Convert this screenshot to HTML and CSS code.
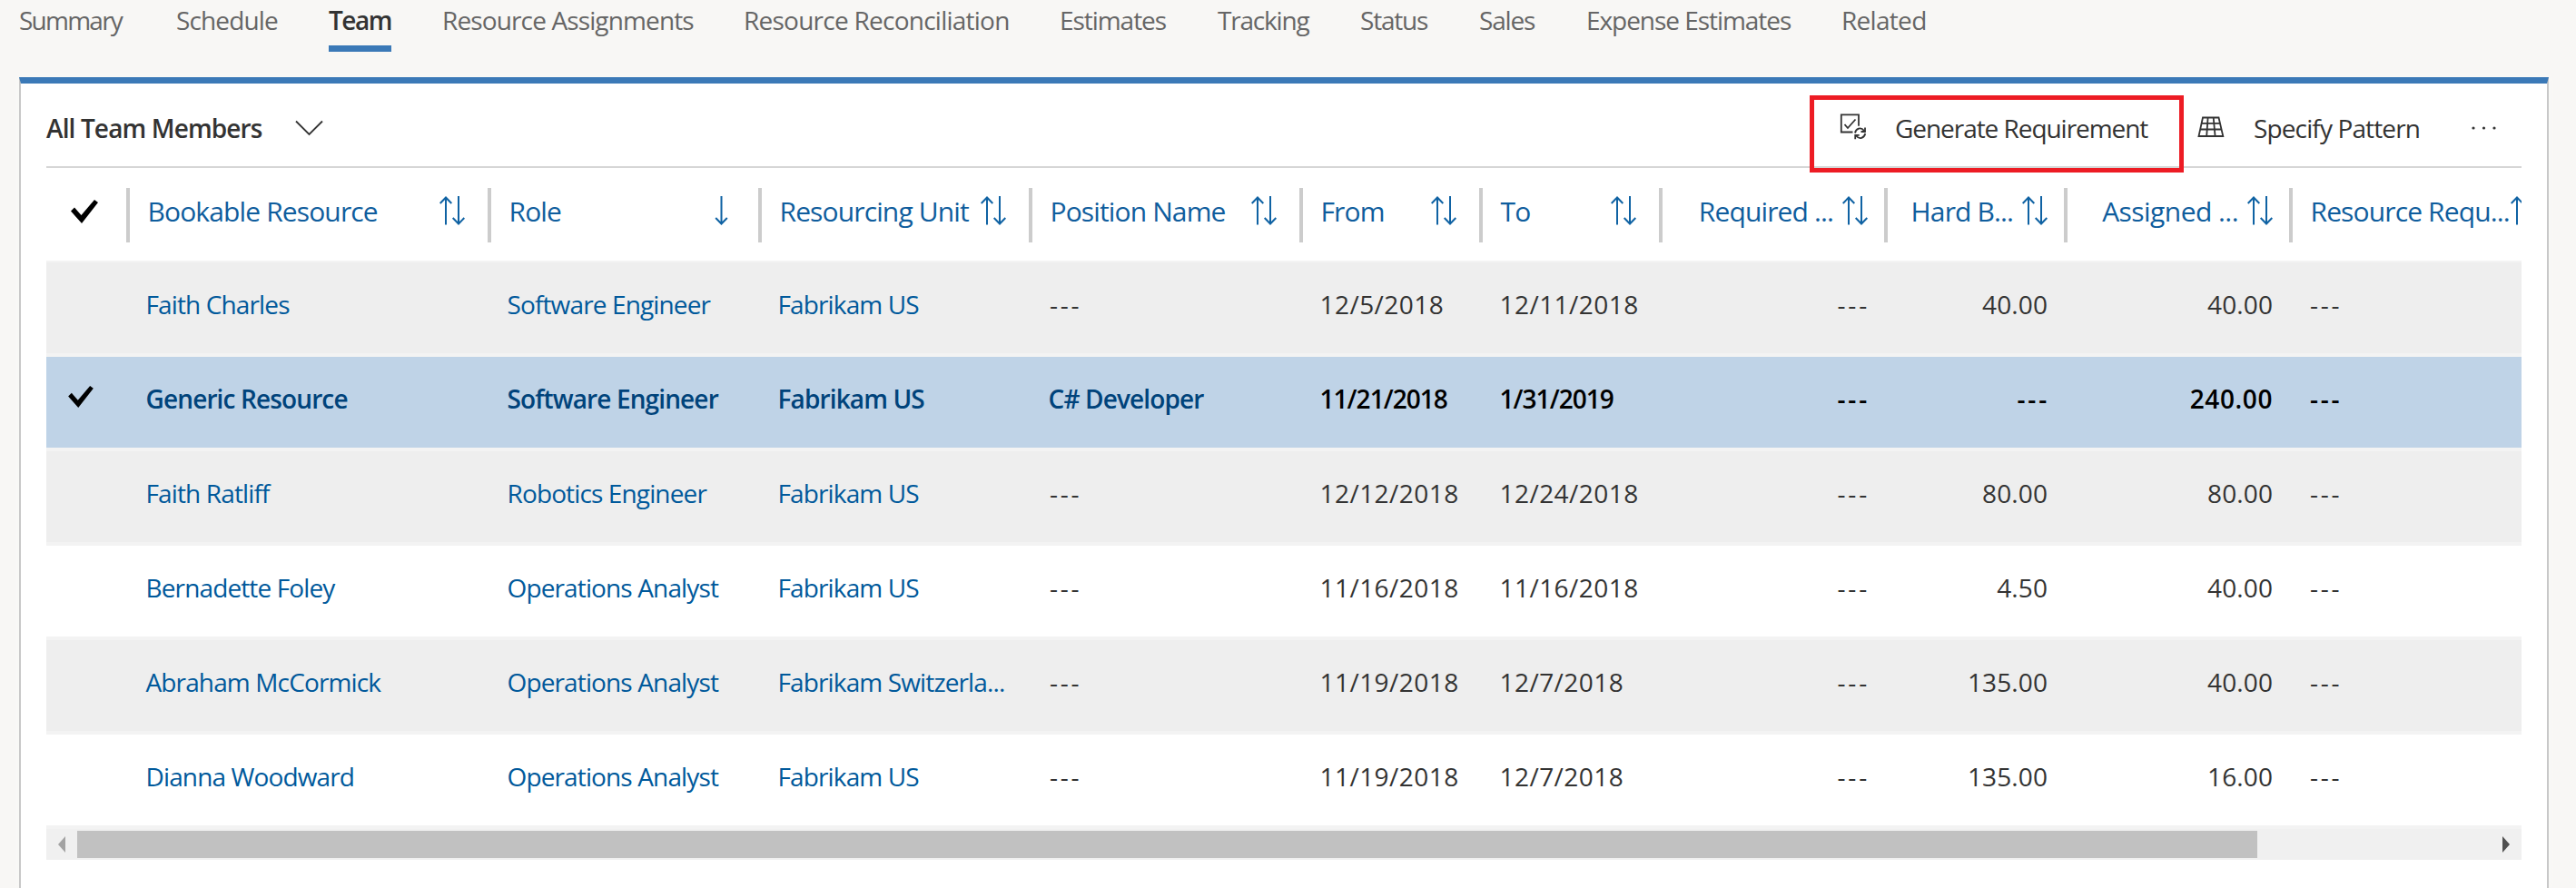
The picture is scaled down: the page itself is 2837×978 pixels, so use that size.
FILE: index.html
```
<!DOCTYPE html>
<html lang="en">
<head>
<meta charset="utf-8">
<title>Team</title>
<link rel="stylesheet" href="styles.css">
</head>
<body>
<svg class="defs" width="0" height="0" aria-hidden="true">
  <symbol id="sort" viewBox="0 0 28 32"><path d="M7 31.500V1.500M.7 8 7 1.500 13.300 8M21 0v30.500M14.700 24 21 30.500 27.300 24"/></symbol>
  <symbol id="down" viewBox="0 0 15 32"><path d="M7.500 0v30.500M1.200 24l6.300 6.500 6.300-6.500"/></symbol>
  <symbol id="check" viewBox="0 0 30 26"><path d="M0 12.500 4 8.500 11.500 17 26 0 30 3 12 26Z"/></symbol>
</svg>
<nav class="tabs">
  <a class="tab t1">Summary</a><a class="tab t2">Schedule</a><a class="tab active">Team</a><a class="tab t4">Resource Assignments</a><a class="tab t5">Resource Reconciliation</a><a class="tab t6">Estimates</a><a class="tab t7">Tracking</a><a class="tab t8">Status</a><a class="tab t9">Sales</a><a class="tab t10">Expense Estimates</a><a class="tab t11">Related</a>
</nav>
<main class="card">
  <header class="toolbar">
    <h1 class="view">All Team Members</h1>
    <svg class="chev" width="32" height="18" viewBox="0 0 32 18"><path d="M1 1.500 15.500 16 30 1.500"/></svg>
    <button class="cmd generate">
      <svg width="30" height="30" viewBox="0 0 30 30"><path d="M14.500 20.500H1.800V1.300H21v12.500M5.500 12 9 16 17.500 6.500"/><path d="M17 21.500c.8-5 6.500-7 10-2.500M28 15.500V20h-4.500M28.200 22c-.8 5-6.500 7-10 2.500M17.200 28.300V23.800h4.500"/></svg>
      <span>Generate Requirement</span>
    </button>
    <button class="cmd pattern">
      <svg width="30" height="24" viewBox="0 0 30 24"><path d="M6 1.500H23.500L28.300 22H1.500ZM4.700 7.800H25M3.200 14.500H26.500M11.600 1.500 10.200 22M17.700 1.500 19.600 22"/></svg>
      <span>Specify Pattern</span>
    </button>
    <svg class="more" width="28" height="4" viewBox="0 0 28 4"><circle cx="2" cy="2" r="1.600"/><circle cx="13.500" cy="2" r="1.600"/><circle cx="25" cy="2" r="1.600"/></svg>
  </header>
  <section class="grid">
    <div class="row head">
      <div class="pick"><svg class="mark" width="30" height="26"><use href="#check"/></svg></div>
      <div class="th"><span>Bookable Resource</span><svg class="s" width="28" height="32"><use href="#sort"/></svg></div>
      <div class="th one"><span>Role</span><svg class="s" width="15" height="32"><use href="#down"/></svg></div>
      <div class="th"><span>Resourcing Unit</span><svg class="s" width="28" height="32"><use href="#sort"/></svg></div>
      <div class="th"><span>Position Name</span><svg class="s" width="28" height="32"><use href="#sort"/></svg></div>
      <div class="th"><span>From</span><svg class="s" width="28" height="32"><use href="#sort"/></svg></div>
      <div class="th"><span>To</span><svg class="s" width="28" height="32"><use href="#sort"/></svg></div>
      <div class="th right"><span>Required ...</span><svg class="s" width="28" height="32"><use href="#sort"/></svg></div>
      <div class="th right"><span>Hard B...</span><svg class="s" width="28" height="32"><use href="#sort"/></svg></div>
      <div class="th right wide"><span>Assigned ...</span><svg class="s" width="28" height="32"><use href="#sort"/></svg></div>
      <div class="th last"><span>Resource Requ...</span><svg class="s" width="28" height="32"><use href="#sort"/></svg></div>
    </div>
    <div class="row body alt">
      <div></div><a>Faith Charles</a><a>Software Engineer</a><a>Fabrikam US</a><i>---</i><b>12/5/2018</b><b>12/11/2018</b><i class="r">---</i><b class="r">40.00</b><b class="r">40.00</b><i>---</i>
    </div>
    <div class="row body selected">
      <div class="pick"><svg class="mark" width="28" height="24"><use href="#check"/></svg></div><a>Generic Resource</a><a>Software Engineer</a><a>Fabrikam US</a><a>C# Developer</a><b class="date">11/21/2018</b><b class="date">1/31/2019</b><i class="r">---</i><i class="r">---</i><b class="r">240.00</b><i>---</i>
    </div>
    <div class="row body alt">
      <div></div><a>Faith Ratliff</a><a>Robotics Engineer</a><a>Fabrikam US</a><i>---</i><b>12/12/2018</b><b>12/24/2018</b><i class="r">---</i><b class="r">80.00</b><b class="r">80.00</b><i>---</i>
    </div>
    <div class="row body">
      <div></div><a>Bernadette Foley</a><a>Operations Analyst</a><a>Fabrikam US</a><i>---</i><b>11/16/2018</b><b>11/16/2018</b><i class="r">---</i><b class="r">4.50</b><b class="r">40.00</b><i>---</i>
    </div>
    <div class="row body alt">
      <div></div><a>Abraham McCormick</a><a>Operations Analyst</a><a>Fabrikam Switzerla...</a><i>---</i><b>11/19/2018</b><b>12/7/2018</b><i class="r">---</i><b class="r">135.00</b><b class="r">40.00</b><i>---</i>
    </div>
    <div class="row body">
      <div></div><a>Dianna Woodward</a><a>Operations Analyst</a><a>Fabrikam US</a><i>---</i><b>11/19/2018</b><b>12/7/2018</b><i class="r">---</i><b class="r">135.00</b><b class="r">16.00</b><i>---</i>
    </div>
  </section>
  <div class="scroll">
    <svg class="prev" width="8" height="18" viewBox="0 0 8 18"><path d="M8 0v18L0 9Z"/></svg>
    <div class="thumb"></div>
    <svg class="next" width="8" height="18" viewBox="0 0 8 18"><path d="M0 0v18L8 9Z"/></svg>
  </div>
</main>
</body>
</html>
```
FILE: styles.css
```
* { box-sizing: border-box; }
html, body { height: 978px; overflow: hidden; }
body {
  margin: 0;
  background: #f8f7f5;
  color: #333;
  font-family: "Open Sans", "Noto Sans", sans-serif;
  font-size: 28px;
  letter-spacing: -.87px;
  white-space: nowrap;
}
svg { display: block; flex: none; }
.defs { position: absolute; }

.tabs {
  display: grid;
  grid-template-columns: 173px 168px 125px 332px 348px 174px 157px 131px 118px 281px auto;
  height: 85px;
  padding-left: 21px;
  line-height: 45px;
  color: #666;
  align-items: start;
  justify-content: start;
}
.tab { height: 57px; }
.active { width: 69px; border-bottom: 7px solid #3b79b7; color: #333; font-weight: 600; letter-spacing: -1.5px; }
.t1 { letter-spacing: -1.75px; }
.t5 { letter-spacing: -.75px; }
.t6, .t10 { letter-spacing: -1.05px; }
.t7, .t8, .t9 { letter-spacing: -1.2px; }
.t11 { letter-spacing: -.7px; }

.card {
  width: 2786px;
  height: 893px;
  margin-left: 21px;
  padding: 0 28px;
  background: #fff;
  border: 2px solid #c8c8c8;
  border-top: 7px solid #3b79b7;
  border-bottom: 0;
  box-shadow: 0 0 8px #fafaf8;
}
.toolbar {
  display: flex;
  align-items: flex-start;
  height: 93px;
  border-bottom: 2px solid #d6d6d6;
}
.toolbar path { fill: none; stroke: #333; stroke-width: 1.8; }
.view { width: 274px; margin: 29px 0 0; font-size: 28px; font-weight: 600; line-height: 41px; }
.chev { margin-top: 40px; }
.cmd {
  display: flex;
  align-items: flex-start;
  padding: 0;
  border: 0;
  background: none;
  font: inherit;
  color: inherit;
  letter-spacing: inherit;
  line-height: 41px;
}
.generate {
  position: relative;
  width: 412px;
  height: 85px;
  margin: 13px 0 0 1636px;
  padding: 11px 0 0 28px;
  border: 5px solid #ed1c24;
  letter-spacing: -1.05px;
}
.generate svg { margin-top: 4px; }
.generate span { margin-left: 31px; }
.pattern { margin-left: 15px; padding-top: 29px; }
.pattern svg { margin-top: 7px; }
.pattern span { margin-left: 32px; }
.more { margin: 47px 0 0 57px; fill: #333; }

.row {
  display: grid;
  grid-template-columns: 88px 398px 298px 298px 298px 198px 198px 248px 198px 248px 256px;
}
.head { height: 104px; color: #0f5d9d; font-size: 30px; border-bottom: 2px solid #f3f3f3; }
.th {
  display: flex;
  justify-content: space-between;
  height: 60px;
  margin-top: 22px;
  padding: 5px 25px 0 19.5px;
  border-left: 4px solid #ccc;
  line-height: 42px;
}
.s { margin-top: 4px; fill: none; stroke: #0f62a3; stroke-width: 2; }
.one { padding-right: 33px; }
.right { justify-content: flex-end; gap: 10px; padding: 5px 18px 0 0; }
.wide { letter-spacing: -.55px; }
.last { justify-content: flex-start; gap: 1px; overflow: hidden; padding-right: 0; }
.mark { margin: 35px 0 0 27px; fill: #000; }

.body {
  height: 104px;
  border-bottom: 4px solid #f3f3f3;
  line-height: 93px;
}
.alt { background: #eee; }
.body > * { padding-left: 21.5px; }
.body a { color: #00599b; }
.body b { padding-left: 22.5px; font-weight: inherit; letter-spacing: .45px; }
.body i { padding-left: 23px; font-style: normal; letter-spacing: 2.8px; }
.body .r { padding: 0 18px 0 0; text-align: right; }
.body i.r { padding-right: 16px; }
.selected { background: #bfd3e7; color: #000; font-weight: 600; }
.selected a { color: #00437b; }
.body .date { letter-spacing: -.95px; }
.body b.r { letter-spacing: .1px; }
.selected b.r { letter-spacing: .6px; }
.body .pick { padding: 0; }
.selected .mark { margin: 32px 0 0 24px; }

.scroll {
  display: flex;
  align-items: center;
  height: 34px;
  background: #f0f0f0;
}
.prev { margin-left: 13px; fill: #a3a3a3; }
.thumb { width: 2401px; height: 30px; margin-left: 13px; background: #c1c1c1; }
.next { margin: 0 13px 0 auto; fill: #505050; }
```
